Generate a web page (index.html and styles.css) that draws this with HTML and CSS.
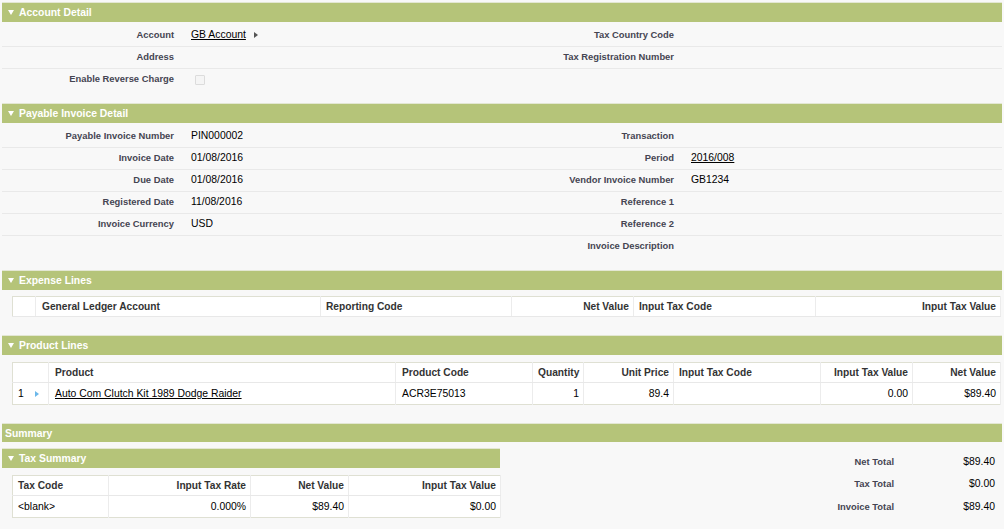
FILE: index.html
```html
<!DOCTYPE html>
<html>
<head>
<meta charset="utf-8">
<link rel="stylesheet" href="styles.css">
</head>
<body>
<div class="page">

  <div class="sec-head"><span class="tri"></span>Account Detail</div>
  <div class="detail">
    <div class="drow">
      <div class="lbl">Account</div><div class="val"><a class="lnk">GB Account</a><span class="rtri"></span></div>
      <div class="lbl">Tax Country Code</div><div class="val"></div>
    </div>
    <div class="drow">
      <div class="lbl">Address</div><div class="val"></div>
      <div class="lbl">Tax Registration Number</div><div class="val"></div>
    </div>
    <div class="drow">
      <div class="lbl">Enable Reverse Charge</div><div class="val"><span class="chk"></span></div>
      <div class="lbl"></div><div class="val"></div>
    </div>
  </div>

  <div class="sec-head"><span class="tri"></span>Payable Invoice Detail</div>
  <div class="detail">
    <div class="drow">
      <div class="lbl">Payable Invoice Number</div><div class="val">PIN000002</div>
      <div class="lbl">Transaction</div><div class="val"></div>
    </div>
    <div class="drow">
      <div class="lbl">Invoice Date</div><div class="val">01/08/2016</div>
      <div class="lbl">Period</div><div class="val"><a class="lnk">2016/008</a></div>
    </div>
    <div class="drow">
      <div class="lbl">Due Date</div><div class="val">01/08/2016</div>
      <div class="lbl">Vendor Invoice Number</div><div class="val">GB1234</div>
    </div>
    <div class="drow">
      <div class="lbl">Registered Date</div><div class="val">11/08/2016</div>
      <div class="lbl">Reference 1</div><div class="val"></div>
    </div>
    <div class="drow">
      <div class="lbl">Invoice Currency</div><div class="val">USD</div>
      <div class="lbl">Reference 2</div><div class="val"></div>
    </div>
    <div class="drow">
      <div class="lbl"></div><div class="val"></div>
      <div class="lbl">Invoice Description</div><div class="val"></div>
    </div>
  </div>

  <div class="sec-head"><span class="tri"></span>Expense Lines</div>
  <div class="tbl-wrap">
    <table class="grid expense">
      <colgroup>
        <col class="c23"><col class="c285"><col class="c191"><col class="c122"><col class="c182"><col class="c185">
      </colgroup>
      <tr>
        <th></th>
        <th>General Ledger Account</th>
        <th>Reporting Code</th>
        <th class="r">Net Value</th>
        <th>Input Tax Code</th>
        <th class="r">Input Tax Value</th>
      </tr>
    </table>
  </div>

  <div class="sec-head"><span class="tri"></span>Product Lines</div>
  <div class="tbl-wrap product-wrap">
    <table class="grid product">
      <colgroup>
        <col class="c36"><col class="c347"><col class="c137"><col class="c51"><col class="c90"><col class="c147"><col class="c92"><col class="c88">
      </colgroup>
      <tr>
        <th></th>
        <th>Product</th>
        <th>Product Code</th>
        <th class="r">Quantity</th>
        <th class="r">Unit Price</th>
        <th>Input Tax Code</th>
        <th class="r">Input Tax Value</th>
        <th class="r">Net Value</th>
      </tr>
      <tr>
        <td>1<span class="btri"></span></td>
        <td><a class="lnk">Auto Com Clutch Kit 1989 Dodge Raider</a></td>
        <td>ACR3E75013</td>
        <td class="r">1</td>
        <td class="r">89.4</td>
        <td></td>
        <td class="r">0.00</td>
        <td class="r">$89.40</td>
      </tr>
    </table>
  </div>

  <div class="sec-head summary-head">Summary</div>
  <div class="summary">
    <div class="sum-left">
      <div class="sec-head"><span class="tri"></span>Tax Summary</div>
      <div class="tbl-wrap tax-wrap">
        <table class="grid tax">
          <colgroup>
            <col class="c96"><col class="c142"><col class="c98"><col class="c152">
          </colgroup>
          <tr>
            <th>Tax Code</th>
            <th class="r">Input Tax Rate</th>
            <th class="r">Net Value</th>
            <th class="r">Input Tax Value</th>
          </tr>
          <tr>
            <td>&lt;blank&gt;</td>
            <td class="r">0.000%</td>
            <td class="r">$89.40</td>
            <td class="r">$0.00</td>
          </tr>
        </table>
      </div>
    </div>
    <div class="totals">
      <div class="trow"><div class="tlbl">Net Total</div><div class="tval">$89.40</div></div>
      <div class="trow"><div class="tlbl">Tax Total</div><div class="tval">$0.00</div></div>
      <div class="trow"><div class="tlbl">Invoice Total</div><div class="tval">$89.40</div></div>
    </div>
  </div>

</div>
</body>
</html>
```
FILE: styles.css
```css
* { box-sizing: border-box; }
html, body { margin: 0; padding: 0; }
body {
  background: #f8f8f8;
  font-family: "Liberation Sans", Arial, Helvetica, sans-serif;
  color: #000;
  width: 1004px;
  height: 529px;
  overflow: hidden;
}
.page { padding: 2px 2px 0 2px; width: 1004px; }

.sec-head {
  height: 20px;
  border-top: 1px solid #e3e7d3;
  background: #b5c479;
  color: #fff;
  font-weight: bold;
  font-size: 10.4px;
  display: flex;
  align-items: center;
  padding-left: 6px;
  gap: 5px;
}
.tri {
  width: 0; height: 0;
  border-left: 3px solid transparent;
  border-right: 3px solid transparent;
  border-top: 5px solid #fff;
}
.summary-head { padding-left: 3px; height: 19px; }

.detail { padding-top: 3px; margin-bottom: 12px; }
.drow {
  display: grid;
  grid-template-columns: 178px 322px 178px 322px;
}
.drow > div {
  height: 22px;
  line-height: 11px;
  padding-top: 4px;
  border-bottom: 1px solid #e9e9e9;
  white-space: nowrap;
}
.drow:last-child > div { border-bottom-color: transparent; }
.lbl {
  text-align: right;
  padding-right: 6px;
  font-weight: bold;
  font-size: 9.4px;
  color: #454552;
}
.val {
  padding-left: 11px;
  font-size: 10.4px;
  display: flex;
  align-items: flex-start;
}
.lnk { color: #000; text-decoration: underline; }
.rtri {
  display: inline-block;
  width: 0; height: 0;
  margin: 3px 0 0 8px;
  border-top: 3px solid transparent;
  border-bottom: 3px solid transparent;
  border-left: 4px solid #555;
}
.chk {
  display: inline-block;
  width: 10px; height: 10px;
  margin: 2px 0 0 4px;
  border: 1px solid #dcdcdc;
  border-radius: 1px;
  background: #f5f5f5;
}

.tbl-wrap { padding: 6px 2px 18px 10px; }
.product-wrap { padding-top: 7px; }
.grid {
  border-collapse: collapse;
  table-layout: fixed;
  background: #fff;
  border: 1px solid #dfe0d3;
  width: 988px;
}
.grid th {
  font-weight: bold;
  font-size: 10.2px;
  color: #333;
  text-align: left;
  height: 20px;
  padding: 0 4px 0 5px;
  border-right: 1px solid #ececec;
  border-bottom: 1px solid #e8e8e8;
  white-space: nowrap;
}
.grid td {
  font-size: 10.4px;
  height: 22px;
  padding: 0 4px 0 5px;
  border-right: 1px solid #ececec;
  white-space: nowrap;
}
.grid .r { text-align: right; }
.product th:nth-child(2), .product td:nth-child(2),
.product th:nth-child(3), .product td:nth-child(3) { padding-left: 6px; }
.expense th:nth-child(2) { padding-left: 6px; }
.btri {
  display: inline-block;
  width: 0; height: 0;
  margin-left: 11px;
  border-top: 3px solid transparent;
  border-bottom: 3px solid transparent;
  border-left: 4px solid #6cb8ea;
}

.c23 { width: 23px; } .c285 { width: 285px; } .c191 { width: 191px; }
.c122 { width: 122px; } .c182 { width: 182px; } .c185 { width: 185px; }
.c36 { width: 36px; } .c347 { width: 347px; } .c137 { width: 137px; }
.c51 { width: 51px; } .c90 { width: 90px; } .c147 { width: 147px; }
.c92 { width: 92px; } .c88 { width: 88px; }
.c96 { width: 96px; } .c142 { width: 142px; } .c98 { width: 98px; } .c152 { width: 152px; }

.summary { display: flex; padding-top: 6px; }
.sum-left { width: 498px; }
.tax-wrap { padding: 7px 0 10px 10px; }
.grid.tax { width: 488px; }
.totals { flex: 1; padding-top: 2px; }
.trow {
  display: grid;
  grid-template-columns: 400px 100px;
  height: 22.5px;
  align-items: center;
}
.tlbl {
  text-align: right;
  padding-right: 6px;
  font-weight: bold;
  font-size: 9.4px;
  color: #454552;
}
.tval {
  text-align: right;
  padding-right: 5px;
  font-size: 10.4px;
}
```
